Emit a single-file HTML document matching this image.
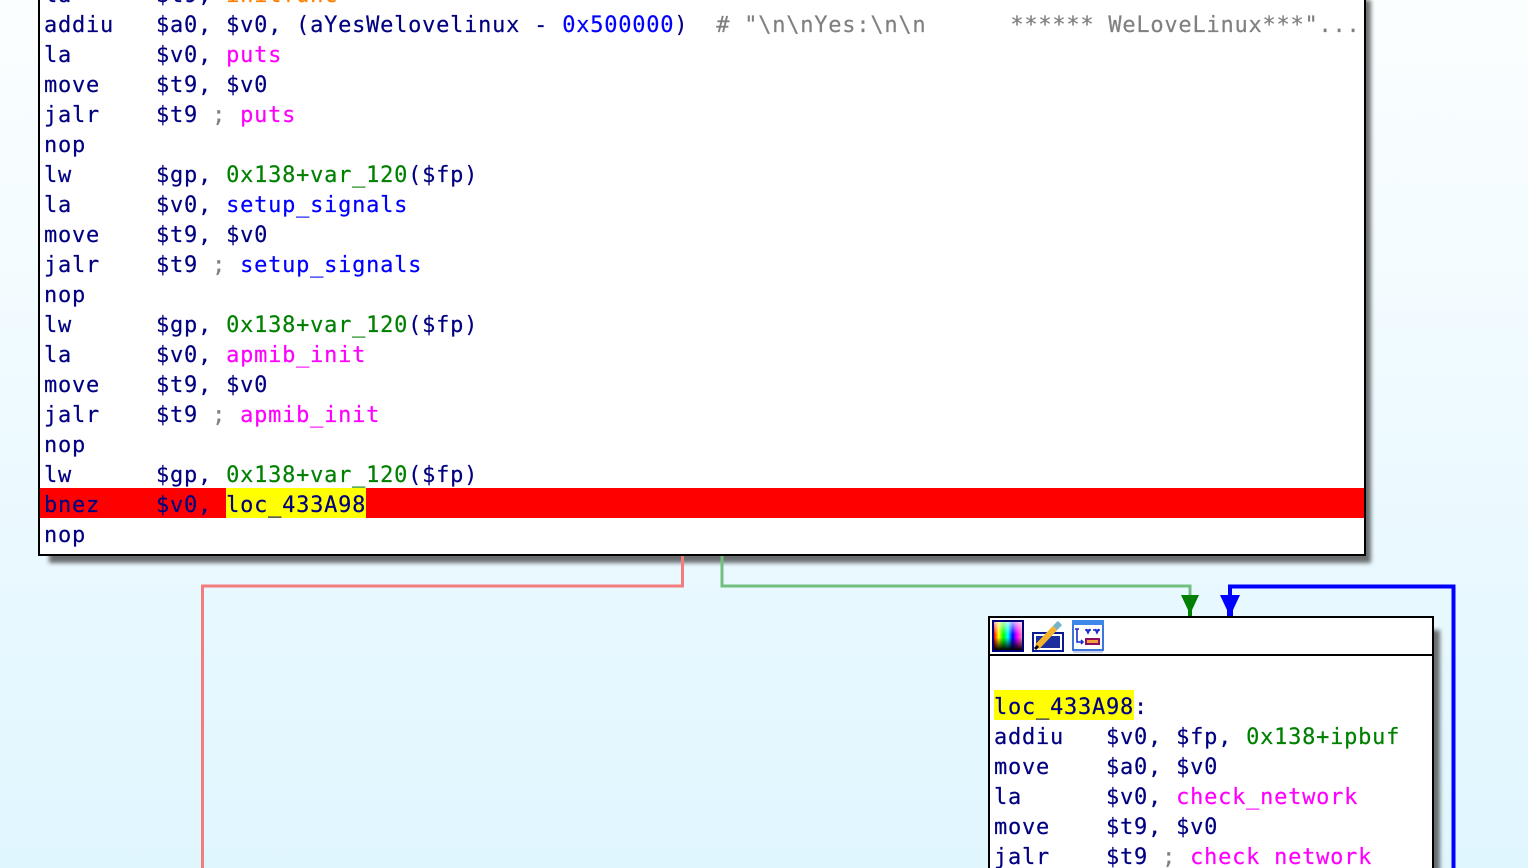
<!DOCTYPE html>
<html><head><meta charset="utf-8"><style>
html,body{margin:0;padding:0;width:1528px;height:868px;overflow:hidden}
body{position:relative;background:linear-gradient(180deg,#fbfeff 0%,#e0f6ff 100%);font-family:"DejaVu Sans Mono","Liberation Mono",monospace;font-size:22px;letter-spacing:.76px;color:#000080;-webkit-text-stroke:.2px}
.n{position:absolute;background:#fff;border:2px solid #000;box-sizing:border-box;overflow:hidden}
.sh{position:absolute;background:#333;filter:blur(2px);opacity:.7}
.r{position:absolute;left:4px;height:30px;line-height:30px;white-space:pre;width:100%}
.p{color:#f0f}.b{color:#00f}.g{color:#008000}.c{color:#808080}.o{color:#ff8000}.s{color:#808080}
.e{position:absolute}
.bar{position:absolute}
</style></head><body>
<div class="sh" style="left:49px;top:0;width:1322px;height:563px"></div>
<div class="n" style="left:38px;top:-30px;width:1328px;height:586px">
<div class="bar" style="left:0;right:0;top:516px;height:30px;background:#f00"></div>
<div class="bar" style="left:186px;width:140px;top:516px;height:30px;background:#ff0"></div>
<div class="r" style="top:9px">la      $t9, <span class="o">initfunc</span></div>
<div class="r" style="top:39px">addiu   $a0, $v0, (aYesWelovelinux - <span class="b">0x500000</span>)  <span class="c"># "\n\nYes:\n\n      ****** WeLoveLinux***"...</span></div>
<div class="r" style="top:69px">la      $v0, <span class="p">puts</span></div>
<div class="r" style="top:99px">move    $t9, $v0</div>
<div class="r" style="top:129px">jalr    $t9 <span class="s">;</span> <span class="p">puts</span></div>
<div class="r" style="top:159px">nop</div>
<div class="r" style="top:189px">lw      $gp, <span class="g">0x138+var_120</span>($fp)</div>
<div class="r" style="top:219px">la      $v0, <span class="b">setup_signals</span></div>
<div class="r" style="top:249px">move    $t9, $v0</div>
<div class="r" style="top:279px">jalr    $t9 <span class="s">;</span> <span class="b">setup_signals</span></div>
<div class="r" style="top:309px">nop</div>
<div class="r" style="top:339px">lw      $gp, <span class="g">0x138+var_120</span>($fp)</div>
<div class="r" style="top:369px">la      $v0, <span class="p">apmib_init</span></div>
<div class="r" style="top:399px">move    $t9, $v0</div>
<div class="r" style="top:429px">jalr    $t9 <span class="s">;</span> <span class="p">apmib_init</span></div>
<div class="r" style="top:459px">nop</div>
<div class="r" style="top:489px">lw      $gp, <span class="g">0x138+var_120</span>($fp)</div>
<div class="r" style="top:519px">bnez    $v0, loc_433A98</div>
<div class="r" style="top:549px">nop</div>
</div>

<svg class="e" style="left:0;top:0" width="1528" height="868" viewBox="0 0 1528 868">
<path d="M682.5 556V586H202.5V868" fill="none" stroke="#f47c7c" stroke-width="3"/>
<path d="M722 556V586H1190V600" fill="none" stroke="#72bf80" stroke-width="3"/>
<path d="M1230 600V586.5H1453.5V868" fill="none" stroke="#00f" stroke-width="4"/>
<path d="M1181 595H1199L1192 610V616H1188V610Z" fill="#008000"/>
<path d="M1220 595H1240L1233 610V616H1227V610Z" fill="#00f"/>
</svg>

<div class="sh" style="left:999px;top:630px;width:441px;height:260px"></div>
<div class="n" style="left:988px;top:616px;width:446px;height:270px">
<div class="bar" style="left:0;right:0;top:36px;height:2px;background:#000"></div>
<div class="bar" style="left:4px;width:140px;top:72px;height:30px;background:#ff0"></div>
<div class="r" style="top:75px">loc_433A98:</div>
<div class="r" style="top:105px">addiu   $v0, $fp, <span class="g">0x138+ipbuf</span></div>
<div class="r" style="top:135px">move    $a0, $v0</div>
<div class="r" style="top:165px">la      $v0, <span class="p">check_network</span></div>
<div class="r" style="top:195px">move    $t9, $v0</div>
<div class="r" style="top:225px">jalr    $t9 <span class="s">;</span> <span class="p">check_network</span></div>
</div>

<div class="e" style="left:992px;top:620px;width:32px;height:32px;box-sizing:border-box;border:2px solid #00007a;background:linear-gradient(180deg,rgba(255,255,255,.7) 0%,rgba(255,255,255,0) 45%,rgba(0,0,0,0) 55%,#000 100%),linear-gradient(90deg,#f00,#ff0,#0f0,#0ff,#00f,#f0f,#f8a)"></div>
<svg class="e" style="left:1032px;top:620px" width="32" height="32" viewBox="0 0 32 32">
<rect x="1" y="13" width="30" height="18" fill="#fff" stroke="#0a1a90" stroke-width="2"/>
<rect x="4" y="16" width="24" height="12" fill="#1c2f9e"/>
<path d="M5 27L23 8" stroke="#f6b42c" stroke-width="6"/>
<path d="M23 8L28 3" stroke="#78b4c8" stroke-width="6"/>
<path d="M3 29L6 26" stroke="#000" stroke-width="3"/>
</svg>
<svg class="e" style="left:1072px;top:620px" width="32" height="33" viewBox="0 0 32 33">
<rect x="1" y="1" width="30" height="29" fill="#fff" stroke="#3d78d8" stroke-width="2"/>
<rect x="0" y="0" width="32" height="5" fill="#3d88e8"/>
<rect x="1" y="31" width="30" height="2" fill="#c5d0f0"/>
<path d="M5 9V22H11M9 20L11 22L9 24M3 9H7M13 10H19M14 9L16 13L18 9M21 10H28M23 9L25 13L27 9" fill="none" stroke="#1a2fd0" stroke-width="1.6"/>
<rect x="13" y="18" width="15" height="7" fill="#8a1060"/>
<rect x="15" y="20" width="11" height="3" fill="#f6a040"/>
</svg>
</body></html>
